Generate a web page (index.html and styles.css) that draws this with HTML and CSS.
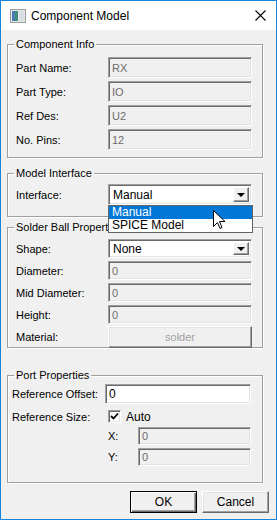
FILE: index.html
```html
<!DOCTYPE html>
<html lang="en">
<head>
  <meta charset="UTF-8">
  <title>Component Model</title>
  <link rel="stylesheet" href="styles.css">
</head>
<body>

  <div class="window">
    <div class="titlebar">
      <svg class="app-icon" width="16" height="14" viewBox="0 0 16 14">
        <rect x="0.5" y="0.5" width="15" height="13" fill="#e8e8e8" stroke="#9a9a9a"/>
        <rect x="2" y="2" width="6" height="10" fill="#3f8f7c"/>
        <rect x="2" y="2" width="3" height="10" fill="#4a7fb8"/>
        <rect x="9" y="2" width="5" height="10" fill="#d8dde2"/>
      </svg>
      <span class="title">Component Model</span>
      <svg class="close" width="11" height="11" viewBox="0 0 11 11">
        <path d="M0.5 0.5 L10.5 10.5 M10.5 0.5 L0.5 10.5" stroke="#000" stroke-width="1.1"/>
      </svg>
    </div>

    <div class="client">
      <fieldset class="group group-info">
        <legend>Component Info</legend>
        <div class="row"><label>Part Name:</label><div class="edit disabled">RX</div></div>
        <div class="row"><label>Part Type:</label><div class="edit disabled">IO</div></div>
        <div class="row"><label>Ref Des:</label><div class="edit disabled">U2</div></div>
        <div class="row"><label>No. Pins:</label><div class="edit disabled">12</div></div>
      </fieldset>

      <fieldset class="group group-model">
        <legend>Model Interface</legend>
        <div class="row combo-row">
          <label>Interface:</label>
          <div class="combo">
            <span class="combo-text">Manual</span>
            <span class="combo-btn"><span class="tri"></span></span>
          </div>
          <ul class="dropdown">
            <li class="selected">Manual</li>
            <li>SPICE Model</li>
          </ul>
          <svg class="cursor" width="13" height="21" viewBox="0 0 13 21">
            <path d="M0.5 0.5 V16.5 L4.5 12.5 L7 18.5 L9 17.5 L6.5 11.5 H12 Z" fill="#fff" stroke="#000" stroke-linejoin="miter"/>
          </svg>
        </div>
      </fieldset>

      <fieldset class="group group-solder">
        <legend>Solder Ball Properties</legend>
        <div class="row tight"><label>Shape:</label>
          <div class="combo">
            <span class="combo-text">None</span>
            <span class="combo-btn"><span class="tri"></span></span>
          </div>
        </div>
        <div class="row tight"><label>Diameter:</label><div class="edit disabled">0</div></div>
        <div class="row tight"><label>Mid Diameter:</label><div class="edit disabled">0</div></div>
        <div class="row tight"><label>Height:</label><div class="edit disabled">0</div></div>
        <div class="row tight"><label>Material:</label><div class="button disabled wide">solder</div></div>
      </fieldset>

      <fieldset class="group group-port">
        <legend>Port Properties</legend>
        <div class="row offset-row"><label class="long">Reference Offset:</label><div class="edit">0</div></div>
        <div class="row check-row">
          <label class="long">Reference Size:</label>
          <span class="checkbox">
            <svg width="9" height="9" viewBox="0 0 9 9"><path d="M1 4 L3.5 6.5 L8 1.5" fill="none" stroke="#000" stroke-width="1.8"/></svg>
          </span>
          <span class="check-label">Auto</span>
        </div>
        <div class="row xy-row"><label class="axis">X:</label><div class="edit disabled">0</div></div>
        <div class="row xy-row"><label class="axis">Y:</label><div class="edit disabled">0</div></div>
      </fieldset>

      <div class="actions">
        <div class="button default">OK</div>
        <div class="button">Cancel</div>
      </div>
    </div>
  </div>

</body>
</html>
```

FILE: styles.css
```css
* {
  box-sizing: border-box;
}

body {
  margin: 0;
  font-family: 'Liberation Sans', Arial, sans-serif;
  font-size: 11px;
  color: #000;
}

.window {
  width: 277px;
  height: 520px;
  border: 1px solid #1883d7;
  display: flex;
  flex-direction: column;
  background-color: #f0f0f0;
}

.titlebar {
  height: 29px;
  background-color: #ffffff;
  display: flex;
  align-items: center;
  padding-left: 9px;
}

.app-icon {
  flex: none;
}

.title {
  font-size: 12px;
  margin-left: 5px;
  flex: 1;
}

.close {
  margin-right: 10px;
}

.client {
  flex: 1;
  display: flex;
  flex-direction: column;
  padding: 8px 0 0 6px;
}

/* group boxes */
.group {
  margin: 0;
  width: 256px;
  border: 1px solid #a0a0a0;
  box-shadow: 1px 1px 0 #fff, inset 1px 1px 0 #fff;
  padding: 0 8px;
  border-radius: 0;
}

.group legend {
  padding: 0 2px;
  margin-left: -2px;
  line-height: 13px;
  height: 13px;
}

.group-info {
  height: 120px;
  padding-top: 6px;
}

.group-model {
  margin-top: 9px;
  height: 50px;
  padding-top: 4px;
}

.group-solder {
  margin-top: 4px;
  height: 127px;
  padding-top: 5px;
}

.group-port {
  margin-top: 21px;
  height: 114px;
  padding: 1px 4px 0;
}

.group-port legend {
  margin-left: 2px;
}

.row {
  display: flex;
  align-items: center;
  height: 21px;
  margin-bottom: 3px;
  position: relative;
}

.row label {
  width: 92px;
  flex: none;
}

.row.tight {
  height: 19px;
  margin-bottom: 3px;
}

/* edits */
.edit {
  width: 144px;
  height: 100%;
  background-color: #ffffff;
  border: 1px solid;
  border-color: #a0a0a0 #ffffff #ffffff #a0a0a0;
  box-shadow: inset 1px 1px 0 #696969, inset -1px -1px 0 #e3e3e3;
  padding-left: 3px;
  display: flex;
  align-items: center;
}

.edit.disabled {
  background-color: #f0f0f0;
  color: #6d6d6d;
}

/* combo */
.combo {
  width: 144px;
  height: 100%;
  background-color: #fff;
  border: 1px solid;
  border-color: #a0a0a0 #ffffff #ffffff #a0a0a0;
  box-shadow: inset 1px 1px 0 #696969, inset -1px -1px 0 #e3e3e3;
  display: flex;
  align-items: center;
  padding: 2px 2px 2px 4px;
}

.combo-text {
  flex: 1;
  font-size: 12px;
}

.combo-btn {
  width: 16px;
  height: 100%;
  background-color: #f0f0f0;
  border: 1px solid;
  border-color: #fff #696969 #696969 #fff;
  box-shadow: inset -1px -1px 0 #a0a0a0;
  display: flex;
  align-items: center;
  justify-content: center;
}

.tri {
  width: 0;
  height: 0;
  border-left: 4px solid transparent;
  border-right: 4px solid transparent;
  border-top: 4px solid #000;
}

.dropdown {
  position: absolute;
  left: 92px;
  top: 21px;
  width: 145px;
  margin: 0;
  padding: 0;
  list-style: none;
  background-color: #fff;
  border: 1px solid #646464;
  z-index: 2;
  font-size: 12px;
}

.dropdown li {
  height: 13px;
  line-height: 13px;
  padding-left: 3px;
}

.dropdown li.selected {
  background-color: #0078d7;
  color: #fff;
}

.cursor {
  position: absolute;
  left: 197px;
  top: 26px;
  z-index: 3;
}

/* buttons */
.button {
  width: 67px;
  height: 22px;
  background-color: #f0f0f0;
  border: 1px solid;
  border-color: #fff #696969 #696969 #fff;
  box-shadow: inset -1px -1px 0 #a0a0a0, inset 1px 1px 0 #e3e3e3;
  display: flex;
  align-items: center;
  justify-content: center;
  font-size: 12px;
}

.button.default {
  border: 1px solid #000;
  box-shadow: inset 1px 1px 0 #fff, inset -1px -1px 0 #696969, inset -2px -2px 0 #a0a0a0;
}

.button.disabled {
  color: #a0a0a0;
  font-size: 11px;
}

.button.wide {
  width: 144px;
  height: 22px;
}

/* port */
.offset-row label.long,
.check-row label.long {
  width: 93px;
}

.offset-row .edit {
  width: 146px;
  height: 20px;
  font-size: 12px;
}

.check-row {
  margin-top: 5px;
  height: 15px;
}

.checkbox {
  width: 13px;
  height: 13px;
  background-color: #fff;
  border: 1px solid;
  border-color: #a0a0a0 #fff #fff #a0a0a0;
  box-shadow: inset 1px 1px 0 #696969, inset -1px -1px 0 #e3e3e3;
  display: flex;
  align-items: center;
  justify-content: center;
  margin-left: 3px;
}

.check-label {
  margin-left: 5px;
  font-size: 12px;
}

.xy-row {
  height: 18px;
  margin-bottom: 3px;
  padding-left: 96px;
}

.xy-row label.axis {
  width: 30px;
}

.xy-row .edit {
  width: 113px;
}

.actions {
  display: flex;
  justify-content: flex-end;
  gap: 5px;
  margin-top: 8px;
  padding-right: 7px;
}
```
